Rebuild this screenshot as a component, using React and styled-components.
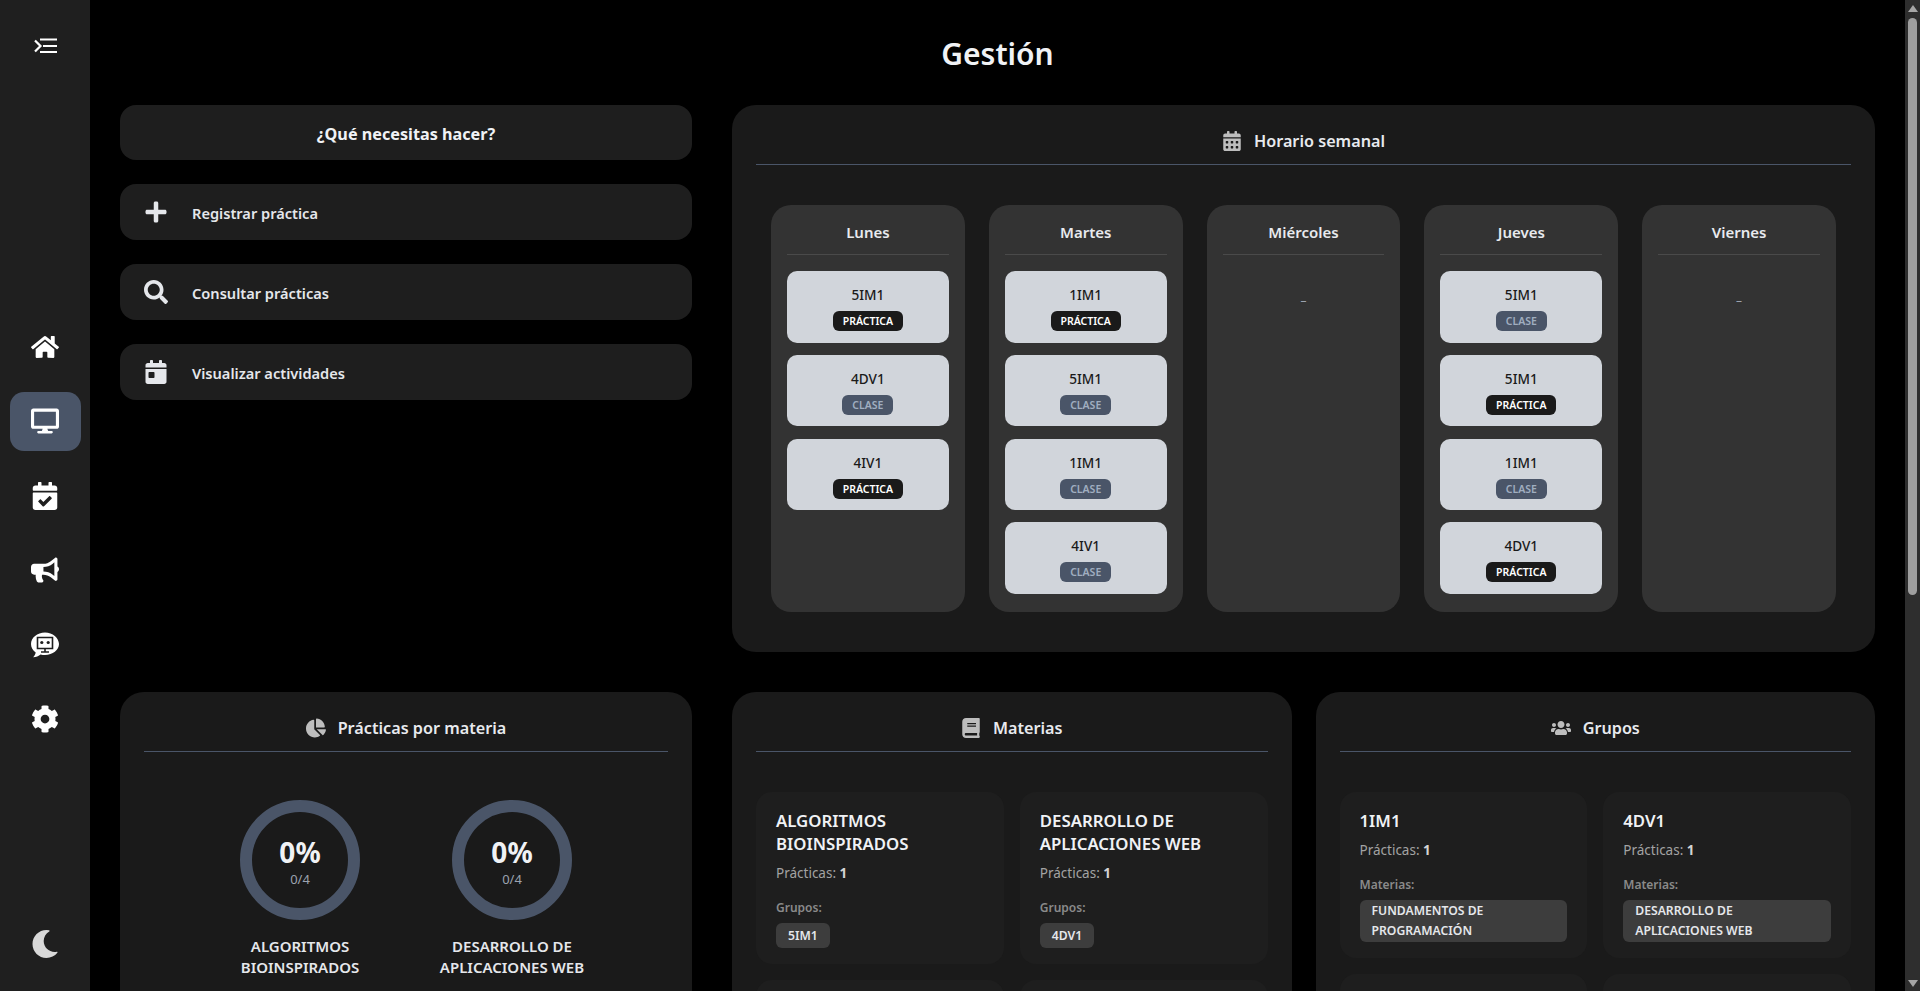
import React from 'react';
import styled, { createGlobalStyle } from 'styled-components';
import {
  FaHome, FaDesktop, FaCalendarCheck, FaBullhorn, FaCog, FaMoon, FaPlus, FaSearch,
  FaCalendarDay, FaCalendarAlt, FaChartPie, FaBook, FaUsers,
} from 'react-icons/fa';

const Global = createGlobalStyle`
  html, body { margin: 0; padding: 0; background: #000; scrollbar-width: none; }
  body { font-family: "Noto Sans", "Open Sans", sans-serif; color: #e5e7eb; }
  * { box-sizing: border-box; }
`;

const Shell = styled.div`
  display: flex;
  align-items: flex-start;
  min-height: 1640px;
`;

const Sidebar = styled.aside`
  position: sticky;
  top: 0;
  flex: 0 0 90px;
  width: 90px;
  height: 100vh;
  background: #1f1f1f;
  display: flex;
  flex-direction: column;
  align-items: center;
  padding: 34px 0 33px;
  color: #fff;
`;

const Toggle = styled.div`
  display: flex;
  height: 24px;
  margin-bottom: 259px;
`;

const Nav = styled.nav`
  display: flex;
  flex-direction: column;
  gap: 15.5px;
`;

const NavItem = styled.div`
  width: 71px;
  height: 59px;
  border-radius: 14px;
  display: flex;
  align-items: center;
  justify-content: center;
  font-size: 28px;
  background: ${p => (p.$active ? '#4a5568' : 'transparent')};
`;

const MoonWrap = styled.div`
  margin-top: auto;
  display: flex;
  font-size: 28px;
  color: #d8d8d8;
`;

const ScrollTrack = styled.div`
  position: sticky;
  top: 0;
  flex: 0 0 15px;
  width: 15px;
  height: 100vh;
  background: #2e2e2e;
  display: flex;
  flex-direction: column;
  align-items: center;
  justify-content: space-between;
  padding: 5px 0 4px;
`;

const ScrollTop = styled.div`
  display: flex;
  flex-direction: column;
  align-items: center;
  gap: 6px;
`;

const ScrollThumb = styled.div`
  width: 9px;
  height: 577px;
  border-radius: 5px;
  background: #9f9f9f;
`;

const Main = styled.main`
  flex: 1;
  min-width: 0;
  padding: 32px 30px 30px;
`;

const Title = styled.h1`
  margin: 0 0 29px;
  text-align: center;
  font-size: 30px;
  line-height: 44px;
  font-weight: 600;
  color: #f0f2f5;
`;

const Row = styled.div`
  display: grid;
  grid-template-columns: 572px minmax(0, 1fr);
  gap: 40px;
  margin-bottom: 40px;
  align-items: start;
`;

const PanelPair = styled.div`
  display: grid;
  grid-template-columns: repeat(2, minmax(0, 1fr));
  gap: 24px;
  align-items: start;
`;

const Actions = styled.div`
  display: flex;
  flex-direction: column;
  gap: 24px;
`;

const AskCard = styled.div`
  height: 55px;
  border-radius: 16px;
  background: #1e1e1e;
  display: flex;
  align-items: center;
  justify-content: center;
  padding-top: 2px;
  font-size: 16.2px;
  font-weight: 700;
  color: #f0f2f5;
`;

const ActionButton = styled.button`
  height: 56px;
  border: 0;
  border-radius: 16px;
  background: #1e1e1e;
  color: #e5e7eb;
  display: flex;
  align-items: center;
  gap: 24px;
  padding: 0 24px;
  font: 600 14.6px "Noto Sans", sans-serif;
  text-align: left;
  svg { width: 24px; height: 24px; flex: none; }
`;

const ActionLabel = styled.span`
  padding-top: 2px;
`;

const Panel = styled.section`
  background: #1a1a1a;
  border-radius: 24px;
  padding: 24px;
`;

const PanelHeader = styled.h2`
  margin: 0 0 40px;
  padding-bottom: 11px;
  border-bottom: 1px solid #4a5568;
  display: flex;
  align-items: center;
  justify-content: center;
  gap: 12px;
  font-size: 16.2px;
  line-height: 24px;
  font-weight: 600;
  color: #e8eaee;
  svg { width: 20px; height: 20px; color: #bdbdbd; flex: none; }
`;

const Week = styled.div`
  display: grid;
  grid-template-columns: repeat(5, minmax(0, 1fr));
  gap: 24px;
  padding: 0 15px 16px;
`;

const Day = styled.div`
  background: #333;
  border-radius: 20px;
  padding: 16px;
  height: 407px;
`;

const DayName = styled.div`
  text-align: center;
  font-size: 15px;
  line-height: 22px;
  font-weight: 600;
  color: #e8eaee;
  padding-bottom: 11px;
  border-bottom: 1px solid #4a4a4a;
  margin-bottom: 16px;
`;

const Empty = styled.div`
  text-align: center;
  color: #9ca3af;
  font-size: 12px;
  line-height: 28px;
  margin-top: 32px;
`;

const Slots = styled.div`
  display: flex;
  flex-direction: column;
  gap: 12.3px;
`;

const Slot = styled.div`
  height: 71.5px;
  background: #d1d5db;
  border-radius: 10px;
  padding: 14px 8px 0;
  display: flex;
  flex-direction: column;
  align-items: center;
  gap: 6px;
  color: #1a1a1a;
  font-size: 13.6px;
  line-height: 20px;
  font-weight: 500;
`;

const Badge = styled.span`
  height: 20px;
  padding: 0 10px;
  border-radius: 6px;
  display: inline-flex;
  align-items: center;
  font-size: 10.5px;
  font-weight: 600;
  background: ${p => (p.$practice ? '#1a1a1a' : '#4a5568')};
  color: ${p => (p.$practice ? '#fff' : '#a0aec0')};
`;

const Rings = styled.div`
  display: grid;
  grid-template-columns: repeat(2, 212px);
  justify-content: center;
  row-gap: 24px;
  margin-top: 48px;
`;

const RingCell = styled.div`
  display: flex;
  flex-direction: column;
  align-items: center;
`;

const Ring = styled.div`
  width: 120px;
  height: 120px;
  border-radius: 50%;
  border: 12px solid #4a5568;
  padding-top: 4px;
  display: flex;
  flex-direction: column;
  align-items: center;
  justify-content: center;
  margin-bottom: 16px;
`;

const RingValue = styled.div`
  font-size: 28px;
  line-height: 32px;
  font-weight: 700;
  color: #f0f2f5;
`;

const RingCount = styled.div`
  margin-top: 2.5px;
  font-size: 13px;
  line-height: 18px;
  color: #9ca3af;
`;

const RingLabel = styled.div`
  width: 190px;
  text-align: center;
  font-size: 15px;
  line-height: 21px;
  font-weight: 600;
  color: #e5e7eb;
`;

const Cards = styled.div`
  display: grid;
  grid-template-columns: repeat(2, minmax(0, 1fr));
  gap: 16px;
  align-items: center;
`;

const Card = styled.div`
  background: #1e1e1e;
  border-radius: 16px;
  padding: 17px 20px 16px;
`;

const CardTitle = styled.div`
  font-size: 16.8px;
  line-height: 23px;
  font-weight: 600;
  color: #f0f2f5;
  margin-bottom: 9px;
`;

const CardStat = styled.div`
  font-size: 13.5px;
  line-height: 19px;
  color: #a3a3a3;
  margin-bottom: 16px;
  b { font-weight: 700; color: #d4d4d4; }
`;

const CardLabel = styled.div`
  font-size: 12px;
  line-height: 18px;
  font-weight: 600;
  color: #8a8a8a;
  margin-bottom: 6px;
`;

const Chip = styled.div`
  width: ${p => (p.$full ? 'auto' : 'fit-content')};
  background: #3d3d3d;
  border-radius: 6px;
  padding: ${p => (p.$full ? '1px 12px' : '2.5px 12px')};
  font-size: 12.2px;
  line-height: 20px;
  font-weight: 600;
  color: #e5e7eb;
`;

const ToggleIcon = () => (
  <svg width="23" height="24" viewBox="0 0 23 24" fill="none" stroke="#fff" strokeWidth="2">
    <path d="M1 6.5 L6.5 12 L1 17.5" strokeWidth="2.2" />
    <path d="M6 5.5 H23 M9 12 H23 M6 18 H23" />
  </svg>
);

const ChatBotIcon = () => (
  <svg width="28" height="28" viewBox="0 0 28 28">
    <path fill="#fff" d="M14 1.5C6.3 1.5 0 6.7 0 13c0 3.4 1.8 6.4 4.7 8.5-.3 1.7-1.2 3.5-2.6 4.8 3-.2 5.6-1.3 7.5-2.8 1.4.4 2.9.5 4.4.5 7.7 0 14-5 14-10.9S21.7 1.5 14 1.5z" />
    <path fill="none" stroke="#1f1f1f" strokeWidth="1.6" d="M6.5 6.5h15v11h-15z" />
    <path stroke="#1f1f1f" strokeWidth="1.6" d="M14 17.5v3M10 21h8" />
    <circle cx="10.8" cy="11.5" r="1.6" fill="#1f1f1f" />
    <circle cx="17.2" cy="11.5" r="1.6" fill="#1f1f1f" />
  </svg>
);

const ScrollArrow = ({ down }) => (
  <svg width="10" height="7" viewBox="0 0 10 7">
    <path fill="#a6a6a6" d={down ? 'M0 0h10L5 7z' : 'M0 7h10L5 0z'} />
  </svg>
);

const WEEK = [
  { day: 'Lunes', slots: [['5IM1', 1], ['4DV1', 0], ['4IV1', 1]] },
  { day: 'Martes', slots: [['1IM1', 1], ['5IM1', 0], ['1IM1', 0], ['4IV1', 0]] },
  { day: 'Miércoles', slots: [] },
  { day: 'Jueves', slots: [['5IM1', 0], ['5IM1', 1], ['1IM1', 0], ['4DV1', 1]] },
  { day: 'Viernes', slots: [] },
];

const RINGS = ['ALGORITMOS BIOINSPIRADOS', 'DESARROLLO DE APLICACIONES WEB', 'FUNDAMENTOS DE PROGRAMACIÓN', 'INGENIERÍA DE SOFTWARE'];

const SUBJECTS = [
  ['ALGORITMOS BIOINSPIRADOS', '5IM1'],
  ['DESARROLLO DE APLICACIONES WEB', '4DV1'],
  ['FUNDAMENTOS DE PROGRAMACIÓN', '1IM1'],
  ['INGENIERÍA DE SOFTWARE', '4IV1'],
];

const GROUPS = [
  ['1IM1', 'FUNDAMENTOS DE PROGRAMACIÓN'],
  ['4DV1', 'DESARROLLO DE APLICACIONES WEB'],
  ['4IV1', 'INGENIERÍA DE SOFTWARE'],
  ['5IM1', 'ALGORITMOS BIOINSPIRADOS'],
];

export default function App() {
  return (
    <>
      <Global />
      <Shell>
        <Sidebar>
          <Toggle><ToggleIcon /></Toggle>
          <Nav>
            <NavItem><FaHome /></NavItem>
            <NavItem $active><FaDesktop /></NavItem>
            <NavItem><FaCalendarCheck /></NavItem>
            <NavItem><FaBullhorn /></NavItem>
            <NavItem><ChatBotIcon /></NavItem>
            <NavItem><FaCog /></NavItem>
          </Nav>
          <MoonWrap><FaMoon /></MoonWrap>
        </Sidebar>
        <Main>
          <Title>Gestión</Title>
          <Row>
            <Actions>
              <AskCard>¿Qué necesitas hacer?</AskCard>
              <ActionButton><FaPlus /><ActionLabel>Registrar práctica</ActionLabel></ActionButton>
              <ActionButton><FaSearch /><ActionLabel>Consultar prácticas</ActionLabel></ActionButton>
              <ActionButton><FaCalendarDay /><ActionLabel>Visualizar actividades</ActionLabel></ActionButton>
            </Actions>
            <Panel>
              <PanelHeader><FaCalendarAlt />Horario semanal</PanelHeader>
              <Week>
                {WEEK.map(d => (
                  <Day key={d.day}>
                    <DayName>{d.day}</DayName>
                    {d.slots.length === 0 ? <Empty>–</Empty> : (
                      <Slots>
                        {d.slots.map(([name, practice], i) => (
                          <Slot key={i}>
                            {name}
                            <Badge $practice={!!practice}>{practice ? 'PRÁCTICA' : 'CLASE'}</Badge>
                          </Slot>
                        ))}
                      </Slots>
                    )}
                  </Day>
                ))}
              </Week>
            </Panel>
          </Row>
          <Row>
            <Panel>
              <PanelHeader><FaChartPie />Prácticas por materia</PanelHeader>
              <Rings>
                {RINGS.map(r => (
                  <RingCell key={r}>
                    <Ring>
                      <RingValue>0%</RingValue>
                      <RingCount>0/4</RingCount>
                    </Ring>
                    <RingLabel>{r}</RingLabel>
                  </RingCell>
                ))}
              </Rings>
            </Panel>
            <PanelPair>
              <Panel>
                <PanelHeader><FaBook />Materias</PanelHeader>
                <Cards>
                  {SUBJECTS.map(([t, g]) => (
                    <Card key={t}>
                      <CardTitle>{t}</CardTitle>
                      <CardStat>Prácticas: <b>1</b></CardStat>
                      <CardLabel>Grupos:</CardLabel>
                      <Chip>{g}</Chip>
                    </Card>
                  ))}
                </Cards>
              </Panel>
              <Panel>
                <PanelHeader><FaUsers />Grupos</PanelHeader>
                <Cards>
                  {GROUPS.map(([t, m]) => (
                    <Card key={t}>
                      <CardTitle>{t}</CardTitle>
                      <CardStat>Prácticas: <b>1</b></CardStat>
                      <CardLabel>Materias:</CardLabel>
                      <Chip $full>{m}</Chip>
                    </Card>
                  ))}
                </Cards>
              </Panel>
            </PanelPair>
          </Row>
        </Main>
        <ScrollTrack>
          <ScrollTop>
            <ScrollArrow />
            <ScrollThumb />
          </ScrollTop>
          <ScrollArrow down />
        </ScrollTrack>
      </Shell>
    </>
  );
}
